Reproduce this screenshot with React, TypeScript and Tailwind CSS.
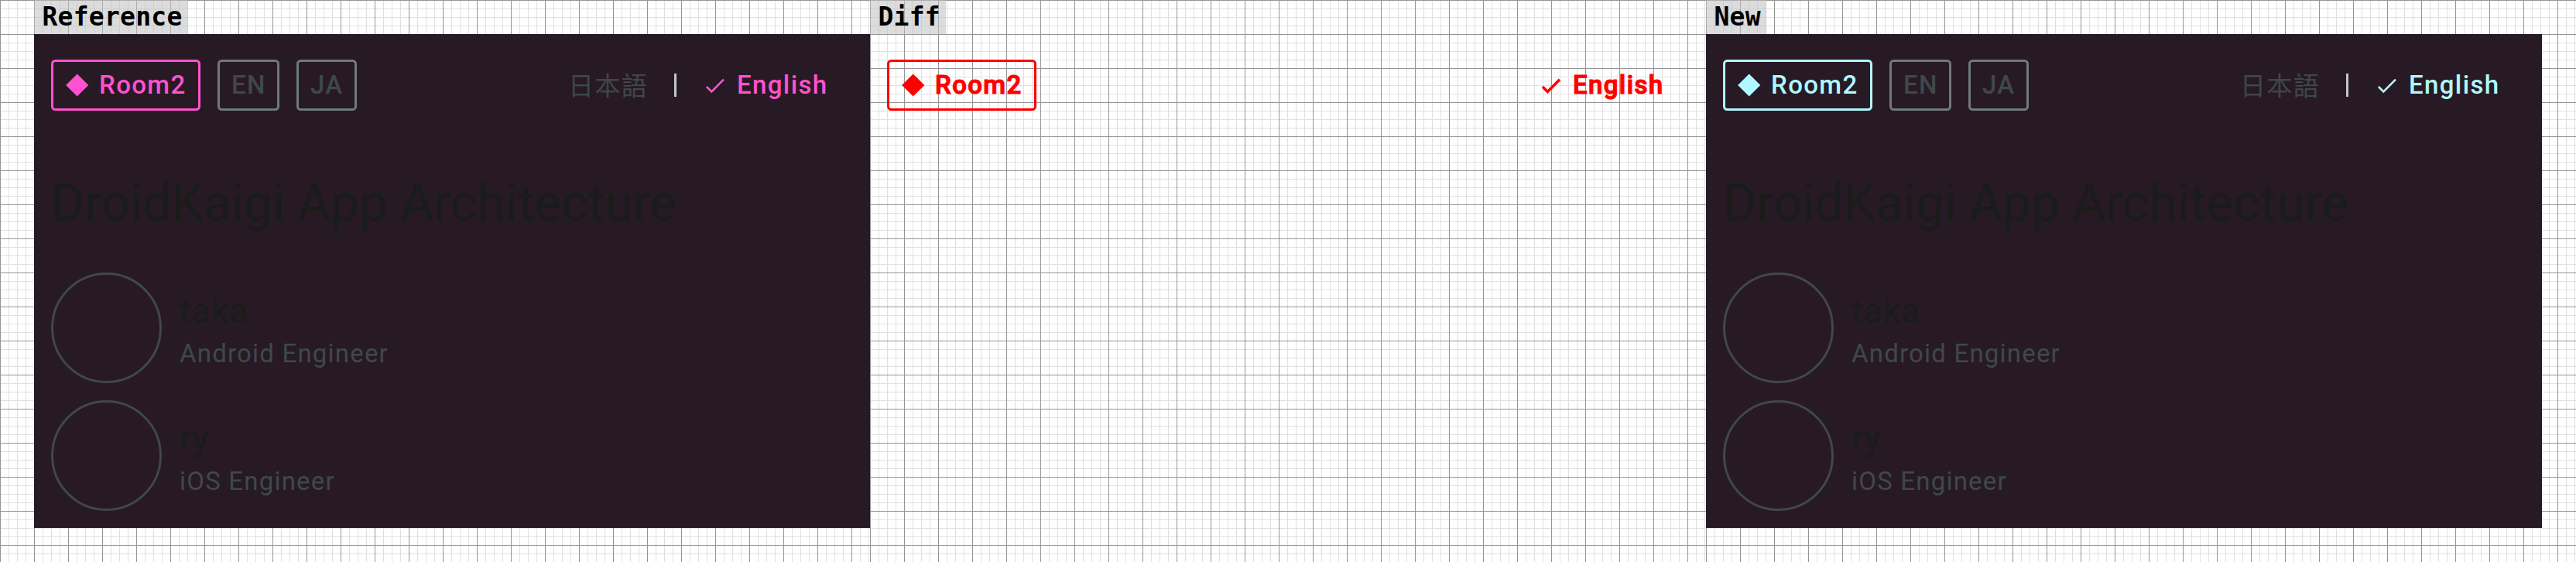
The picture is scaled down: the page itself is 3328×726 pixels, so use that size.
import React from "react";

const grid =
  "bg-[linear-gradient(to_right,#959595_1px,transparent_1px),linear-gradient(to_bottom,#959595_1px,transparent_1px),linear-gradient(to_right,#e0e0e0_1px,transparent_1px),linear-gradient(to_bottom,#e0e0e0_1px,transparent_1px)] bg-[size:44px_44px,44px_44px,11px_11px,11px_11px]";

function Label({ text }: { text: string }) {
  return (
    <div className="flex h-11 items-start">
      <div className="h-11 bg-[#c0c0c0]/55 pr-[7px] pl-[10.5px] font-['DejaVu_Sans_Mono',monospace] text-[33px] leading-[43px] font-bold tracking-[0.25px] text-black">
        {text}
      </div>
    </div>
  );
}

function Diamond() {
  return (
    <svg viewBox="0 0 30 30" className="size-[30px] shrink-0" fill="currentColor">
      <path d="M14.7 0.5 29.3 15 14.7 29.5 0.1 15Z" />
    </svg>
  );
}

function Check({ heavy }: { heavy?: boolean }) {
  return (
    <svg viewBox="0 0 24 20" className="h-5 w-6 shrink-0 overflow-visible" fill="none" stroke="currentColor" strokeWidth={heavy ? 3.6 : 2.6}>
      <path d="M0.9 12 7.3 18.4 23 2.7" />
    </svg>
  );
}

function RoomChip({ className }: { className: string }) {
  return (
    <div className={`flex h-[66px] w-[193px] items-center rounded-[5.5px] border-3 pl-4 ${className}`}>
      <Diamond />
      <span className="ml-[13px]">Room2</span>
    </div>
  );
}

function Speaker({ name, role }: { name: string; role: string }) {
  return (
    <div className="flex items-center gap-[23px]">
      <div className="size-[143px] rounded-full border-3 border-[#3f484a]" />
      <div>
        <div className="text-[44px] leading-[66px] tracking-[1.2px] text-[#191c1a]">{name}</div>
        <div className="text-[33px] leading-[44px] tracking-[1.2px] text-[#3f484a]">{role}</div>
      </div>
    </div>
  );
}

const meta = "font-['Roboto','Noto_Sans_CJK_SC',sans-serif] text-[33px] leading-[44px] font-medium tracking-[1.375px]";

function Card({ accent, border }: { accent: string; border: string }) {
  return (
    <div className="h-[638px] w-[1080px] bg-[#271a24] pt-[33px] pl-[22px] font-['Roboto',sans-serif]">
      <div className={`flex items-center text-[#3f484a] ${meta}`}>
        <RoomChip className={`${accent} ${border}`} />
        <div className="ml-[22px] flex h-[66px] w-20 items-center rounded-[5.5px] border-3 border-[#6f797a] pl-[15px]">EN</div>
        <div className="ml-[22px] flex h-[66px] w-[78px] items-center rounded-[5.5px] border-3 border-[#6f797a] pl-[15px]">JA</div>
        <div lang="zh-Hans" className="ml-[273px] w-[137px] pb-[3px] font-['Noto_Sans_CJK_SC',sans-serif] font-[350] [-webkit-text-stroke:0.25px_#3f484a]">日本語</div>
        <div className="h-[30px] w-[3px] bg-[#bfc8ca]" />
        <div className={`ml-[38px] flex items-center ${accent}`}>
          <Check />
          <span className="ml-4">English</span>
        </div>
      </div>
      <div className="mt-[76px] text-[66px] leading-[88px] tracking-[-0.06px] text-[#191c1a]">DroidKaigi App Architecture</div>
      <div className="mt-[45px] flex flex-col gap-[22px]">
        <Speaker name="taka" role="Android Engineer" />
        <Speaker name="ry" role="iOS Engineer" />
      </div>
    </div>
  );
}

function DiffCard() {
  return (
    <div className={`flex w-[1080px] items-start pt-[33px] pl-[22px] text-[#ff0000] [-webkit-text-stroke:1.2px_#ff0000] ${meta}`}>
      <RoomChip className="border-[#ff0000]" />
      <div className="ml-[653px] flex h-[66px] items-center">
        <Check heavy />
        <span className="ml-4">English</span>
      </div>
    </div>
  );
}

export default function App() {
  return (
    <div className="flex h-[726px] w-[3328px] overflow-hidden bg-white">
      <section className={`w-[1124px] pl-11 ${grid}`}>
        <Label text="Reference" />
        <Card accent="text-[#ff51d0]" border="border-[#ff51d0]" />
      </section>
      <section className={`w-[1080px] ${grid}`}>
        <Label text="Diff" />
        <DiffCard />
      </section>
      <section className={`w-[1124px] ${grid}`}>
        <Label text="New" />
        <Card accent="text-[#b0f8ff]" border="border-[#b0f8ff]" />
      </section>
    </div>
  );
}
